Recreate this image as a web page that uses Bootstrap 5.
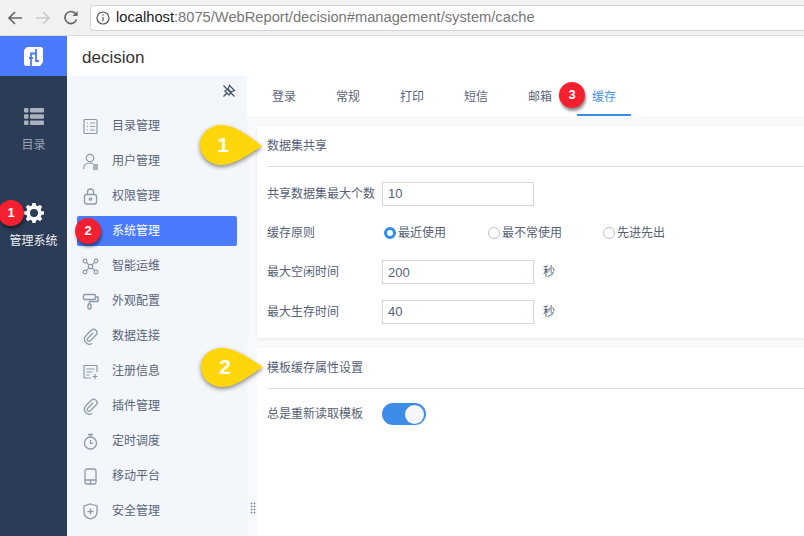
<!DOCTYPE html>
<html lang="zh-CN">
<head>
<meta charset="utf-8">
<title>decision</title>
<link href="https://cdn.jsdelivr.net/npm/bootstrap@5.3.0/dist/css/bootstrap.min.css" rel="stylesheet">
<style>
html,body{height:536px;overflow:hidden}
body{position:relative;font-family:"Liberation Sans","Noto Sans CJK SC",sans-serif;font-size:12px;color:#566174;background:#fff}
.chrome-bar{height:36px;background:#f1f1f1;border-bottom:1px solid #dcdcdc;padding-left:1px}
.chrome-btn{width:28px;display:flex;justify-content:center}
.address{flex:1;margin-left:5px;height:26px;background:#fff;border:1px solid #d6d6d6;border-right:0;border-radius:4px 0 0 4px;padding-left:5px;font-size:14.7px;color:#777;white-space:nowrap}
.address svg{margin-right:6px;flex:none}
.address b{font-weight:400;color:#222}
.app-top{height:40px}
.logo-box{width:67px;background:#4a7bff}
.app-name{font-size:17px;color:#333;padding:3px 0 0 15px;box-shadow:0 1px 3px rgba(0,0,0,.04);flex:1}
.app-main{height:460px}
.rail{width:67px;background:#2c3c57;color:#97a2b2;font-size:12px;padding-top:32px}
.rail-item{height:50px}
.rail-item.on{color:#eef1f5;margin-top:45px}
.rail-item span{margin-top:12px;line-height:16px}
.rail-item.on span{margin-top:10px}
.side{width:180px;background:#f3f6fb;padding:0 10px;position:relative}
.pin-row{height:35px;padding:8px 1px 0 0}
.side-link{height:30px;margin-bottom:5px;padding:0 0 0 5px;color:#59657a;border-radius:2px;gap:13px}
.side-link svg{flex:none}
.side-link.on{background:#4a7bff;color:#fff}
.drag{position:absolute;left:183px;top:426px;width:6px;height:12px;background:radial-gradient(circle,#6f7b8c 0 .8px,transparent 1.100px) 0 0/3px 3px}
.work{flex:1;background:#f8f9fb;min-width:0}
.tabbar{height:40px;background:#fff;padding-left:5px;margin-bottom:10px}
.tabbar .nav-link{width:64px;height:40px;padding:0;color:#5a6577;font-size:12px;text-align:center;line-height:43px;position:relative;border:0}
.tabbar .nav-link.active{color:#4a90e8}
.tabbar .nav-link.active::after{content:"";position:absolute;left:5px;right:5px;bottom:0;height:2px;background:#3f8ce8}
.panel{background:#fff;margin-left:10px;padding-left:10px;box-shadow:0 1px 3px rgba(0,0,0,.08)}
.panel-one{height:212px;margin-bottom:10px}
.panel-two{height:190px;box-shadow:none}
.panel-title{height:41px;border-bottom:1px solid #d9dee3;line-height:41px;color:#566174;font-size:12px}
.field{height:39.3px}
.field-first{margin-top:7px}
.field label,.field-name{width:115px;flex:none;font-size:12px}
.field .form-control{width:152px;height:24px;padding:0 5px;border:1px solid #d3d9dd;border-radius:0;font-size:13px;color:#566174;flex:none}
.unit{margin-left:9px}
.choice{gap:2px;margin:0;padding:0;min-height:0}
.choice-a{margin-left:2px;width:104px}
.choice-b{width:115px}
.choice .form-check-input{float:none;margin:0;width:12px;height:12px;border:1px solid #b9c0c8;background-color:#fff;flex:none}
.choice .form-check-input:checked{background-color:#fff;border:3.5px solid #2f8fe8;background-image:none}
.toggle-row{height:50px}
.toggle-row .form-switch{padding:0;margin:0;min-height:0;line-height:0}
.toggle-row .form-check-input{width:44px;height:22px;margin:0;float:none;border:0;background-color:#3f8ce8;background-image:none;position:relative;border-radius:11px}
.knob{position:absolute;left:405px;top:405px;width:19px;height:19px;border-radius:50%;background:#f6f7fb}
.tip{position:absolute;left:198px;width:68px;height:48px}
.tip svg{position:absolute;inset:0;overflow:visible;filter:drop-shadow(0 2px 2px rgba(0,0,0,.45))}
.tip span{position:absolute;left:2px;width:46px;top:1px;line-height:42px;text-align:center;color:#fff;font-size:21px;font-weight:700;font-family:"Liberation Sans",sans-serif}
.dot{position:absolute;width:26px;height:26px;border-radius:50%;background:#f4202f;color:#fff;text-align:center;line-height:25px;font-size:13px;font-weight:700;font-family:"Liberation Sans",sans-serif;box-shadow:1px 3px 3px rgba(0,0,0,.45)}
</style>
</head>
<body>
<div class="chrome-bar d-flex align-items-center">
  <div class="chrome-btn"><svg width="16" height="14" viewBox="0 0 16 14" fill="none" stroke="#666" stroke-width="1.700"><path d="M15 7H2M8 1 2 7l6 6"/></svg></div>
  <div class="chrome-btn"><svg width="16" height="14" viewBox="0 0 16 14" fill="none" stroke="#c9c9c9" stroke-width="1.700"><path d="M1 7h13M8 1l6 6-6 6"/></svg></div>
  <div class="chrome-btn"><svg width="16" height="16" viewBox="0 0 16 16" fill="none" stroke="#666" stroke-width="1.700"><path d="M13.600 9.500A6 6 0 1 1 12.500 3.600L14 5"/><path d="M14.600 1v5h-5" fill="#666" stroke="none"/></svg></div>
  <div class="address d-flex align-items-center"><svg width="14" height="14" viewBox="0 0 14 14" fill="none" stroke="#555" stroke-width="1.200"><circle cx="7" cy="7" r="6"/><path d="M7 6v4.200M7 3.400v1.400"/></svg><span><b>localhost</b>:8075/WebReport/decision#management/system/cache</span></div>
</div>
<div class="app-top d-flex">
  <div class="logo-box d-flex align-items-center justify-content-center"><svg width="19" height="19" viewBox="0 0 19 19"><path fill="#fff" d="M3 0H16.500Q19 0 19 2.500V15L16 19H2.500Q0 19 0 16.500V3z"/><path fill="none" stroke="#4a7bff" stroke-width="1.800" d="M7 19V6.500H12M5 11H9M12 2V14H15"/></svg></div>
  <div class="app-name d-flex align-items-center">decision</div>
</div>
<div class="app-main d-flex">
  <nav class="rail d-flex flex-column">
    <div class="rail-item d-flex flex-column align-items-center"><svg width="20" height="17" viewBox="0 0 20 17" fill="#a9b2c0"><rect y="0" width="4.500" height="4.500" rx="1"/><rect x="6" y="0" width="14" height="4.500" rx="1"/><rect y="6.200" width="4.500" height="4.500" rx="1"/><rect x="6" y="6.200" width="14" height="4.500" rx="1"/><rect y="12.400" width="4.500" height="4.500" rx="1"/><rect x="6" y="12.400" width="14" height="4.500" rx="1"/></svg><span>目录</span></div>
    <div class="rail-item on d-flex flex-column align-items-center"><svg width="20" height="20" viewBox="0 0 20 20"><path fill="#fff" fill-rule="evenodd" d="M8.400 0h3.200l.5 2.600 1.700.7 2.200-1.500 2.200 2.200-1.500 2.200.7 1.700 2.600.5v3.200l-2.600.5-.7 1.700 1.500 2.200-2.200 2.200-2.200-1.500-1.700.7-.5 2.600H8.400l-.5-2.600-1.700-.7L4 18.200 1.800 16l1.500-2.200-.7-1.700L0 11.600V8.400l2.600-.5.700-1.700L1.800 4 4 1.800l2.200 1.500 1.700-.7zM10 6a4 4 0 1 0 0 8 4 4 0 0 0 0-8z"/></svg><span>管理系统</span></div>
  </nav>
  <aside class="side">
    <div class="pin-row d-flex justify-content-end"><svg width="14" height="14" viewBox="0 0 14 14" fill="none" stroke="#46536a" stroke-width="1.300"><path d="M7.500 1.500 12.500 6.500 9 8 6 5zM6 5 3 7l4 4 2-3M1.500 1.500l11 11M1.500 12.500 4.500 9.500"/></svg></div>
    <a class="side-link d-flex align-items-center text-decoration-none" href="#"><svg width="17" height="17" viewBox="0 0 17 17" fill="none" stroke="#8e99a9" stroke-width="1.200"><rect x="2" y="1.500" width="13" height="14" rx="1"/><path d="M5 5h1M8 5h5M5 8.500h1M8 8.500h5M5 12h1M8 12h5"/></svg>目录管理</a>
    <a class="side-link d-flex align-items-center text-decoration-none" href="#"><svg width="17" height="17" viewBox="0 0 17 17" fill="none" stroke="#8e99a9" stroke-width="1.200"><circle cx="8" cy="5" r="3.700"/><path d="M1.500 16c0-4 2.500-6 6.500-6 1 0 2 .2 3 .6"/><path d="M11 12h5M11 14h5M11 16h5" stroke-width="1.300"/></svg>用户管理</a>
    <a class="side-link d-flex align-items-center text-decoration-none" href="#"><svg width="17" height="17" viewBox="0 0 17 17" fill="none" stroke="#8e99a9" stroke-width="1.300"><rect x="2.500" y="6.500" width="12" height="9.500" rx="2"/><path d="M5.500 6.500V4a3 3 0 0 1 6 0v2.500"/><circle cx="8.500" cy="11" r="1.200"/></svg>权限管理</a>
    <a class="side-link on d-flex align-items-center text-decoration-none" href="#"><svg width="17" height="17" viewBox="0 0 17 17"></svg>系统管理</a>
    <a class="side-link d-flex align-items-center text-decoration-none" href="#"><svg width="17" height="17" viewBox="0 0 17 17" fill="none" stroke="#8e99a9" stroke-width="1.200"><path d="M3 3l11 11M14 3 3 14"/><circle cx="3" cy="3" r="1.800" fill="#f3f6fb"/><circle cx="14" cy="3" r="1.800" fill="#f3f6fb"/><circle cx="3" cy="14" r="1.800" fill="#f3f6fb"/><circle cx="14" cy="14" r="1.800" fill="#f3f6fb"/><circle cx="8.500" cy="8.500" r="2.200" fill="#f3f6fb"/></svg>智能运维</a>
    <a class="side-link d-flex align-items-center text-decoration-none" href="#"><svg width="17" height="17" viewBox="0 0 17 17" fill="none" stroke="#8e99a9" stroke-width="1.400"><rect x="1.500" y="1.500" width="12" height="5" rx="1.500"/><path d="M13.500 4h2.500v4.500H7.500V11"/><rect x="6" y="11" width="3" height="5" rx="1.300"/></svg>外观配置</a>
    <a class="side-link d-flex align-items-center text-decoration-none" href="#"><svg width="17" height="17" viewBox="0 0 17 17" fill="none" stroke="#8e99a9" stroke-width="1.300"><path d="M11 5 5.500 10.500a1.800 1.800 0 0 0 2.500 2.500L14 7a3.300 3.300 0 0 0-4.700-4.700L3.300 8.400A5 5 0 0 0 10 15.500"/></svg>数据连接</a>
    <a class="side-link d-flex align-items-center text-decoration-none" href="#"><svg width="17" height="17" viewBox="0 0 17 17" fill="none" stroke="#8e99a9" stroke-width="1.200"><path d="M9 15H2V2.500h13V9"/><path d="M4.500 6h8M4.500 9h6M4.500 12h3M13 11v5M10.500 13.500h5"/></svg>注册信息</a>
    <a class="side-link d-flex align-items-center text-decoration-none" href="#"><svg width="17" height="17" viewBox="0 0 17 17" fill="none" stroke="#8e99a9" stroke-width="1.300"><path d="M11 5 5.500 10.500a1.800 1.800 0 0 0 2.500 2.500L14 7a3.300 3.300 0 0 0-4.700-4.700L3.300 8.400A5 5 0 0 0 10 15.500"/></svg>插件管理</a>
    <a class="side-link d-flex align-items-center text-decoration-none" href="#"><svg width="17" height="17" viewBox="0 0 17 17" fill="none" stroke="#8e99a9" stroke-width="1.300"><circle cx="8.500" cy="10" r="6"/><path d="M6 1.500h5M8.500 1.500V4M8.500 7v3.300h2.500"/></svg>定时调度</a>
    <a class="side-link d-flex align-items-center text-decoration-none" href="#"><svg width="17" height="17" viewBox="0 0 17 17" fill="none" stroke="#8e99a9" stroke-width="1.300"><rect x="3" y="1" width="11" height="15" rx="2"/><path d="M3 12h11M8.500 12v4"/></svg>移动平台</a>
    <a class="side-link d-flex align-items-center text-decoration-none" href="#"><svg width="17" height="17" viewBox="0 0 17 17" fill="none" stroke="#8e99a9" stroke-width="1.300"><path d="M8.500 1 15 3v6c0 3.500-3 6-6.500 7C5 15 2 12.500 2 9V3z"/><path d="M8.500 5.500v6M5.500 8.500h6"/></svg>安全管理</a>
    <div class="drag"></div>
  </aside>
  <main class="work">
    <ul class="tabbar nav">
      <li class="nav-item"><a class="nav-link" href="#">登录</a></li>
      <li class="nav-item"><a class="nav-link" href="#">常规</a></li>
      <li class="nav-item"><a class="nav-link" href="#">打印</a></li>
      <li class="nav-item"><a class="nav-link" href="#">短信</a></li>
      <li class="nav-item"><a class="nav-link" href="#">邮箱</a></li>
      <li class="nav-item"><a class="nav-link active" href="#">缓存</a></li>
    </ul>
    <section class="panel panel-one">
      <div class="panel-title">数据集共享</div>
      <div class="field field-first d-flex align-items-center"><label for="f1">共享数据集最大个数</label><input id="f1" class="form-control" value="10"></div>
      <div class="field d-flex align-items-center"><span class="field-name">缓存原则</span>
        <div class="form-check choice choice-a d-flex align-items-center"><input class="form-check-input" type="radio" name="r" id="r1" checked><label class="form-check-label" for="r1">最近使用</label></div>
        <div class="form-check choice choice-b d-flex align-items-center"><input class="form-check-input" type="radio" name="r" id="r2"><label class="form-check-label" for="r2">最不常使用</label></div>
        <div class="form-check choice d-flex align-items-center"><input class="form-check-input" type="radio" name="r" id="r3"><label class="form-check-label" for="r3">先进先出</label></div>
      </div>
      <div class="field d-flex align-items-center"><label for="f2">最大空闲时间</label><input id="f2" class="form-control" value="200"><span class="unit">秒</span></div>
      <div class="field d-flex align-items-center"><label for="f3">最大生存时间</label><input id="f3" class="form-control" value="40"><span class="unit">秒</span></div>
    </section>
    <section class="panel panel-two">
      <div class="panel-title">模板缓存属性设置</div>
      <div class="toggle-row d-flex align-items-center"><label class="field-name" for="t1">总是重新读取模板</label><div class="form-check form-switch"><input class="form-check-input" type="checkbox" role="switch" id="t1" checked></div></div>
    </section>
  </main>
</div>
<div class="knob"></div>
<div class="tip" style="top:123px"><svg width="68" height="48" viewBox="0 0 68 48"><path fill="#ffd60a" d="M2 22C2 10 12 2 24 2c12 0 26 10 40 21C50 32 36 42 24 42 12 42 2 34 2 22z"/></svg><span>1</span></div>
<div class="tip" style="top:345px"><svg width="68" height="48" viewBox="0 0 68 48"><path fill="#ffd60a" d="M3 22C3 10 13 3 25 3c12 0 26 10 40 19C51 31 37 42 25 42 13 42 3 34 3 22z"/></svg><span style="left:4px">2</span></div>
<div class="dot" style="left:-2px;top:200px">1</div>
<div class="dot" style="left:75px;top:218px">2</div>
<div class="dot" style="left:559px;top:82px">3</div>
</body>
</html>
